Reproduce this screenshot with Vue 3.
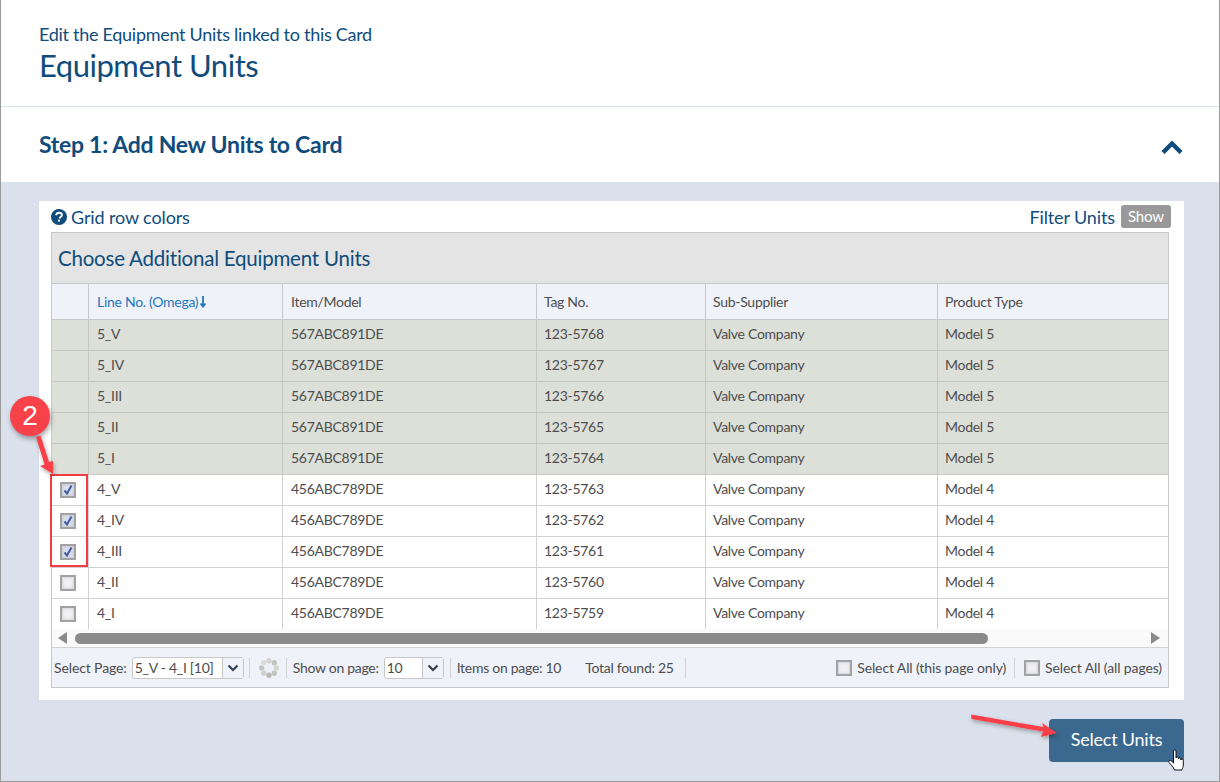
<script setup>
const green = [
  ['5_V', '567ABC891DE', '123-5768', 'Valve Company', 'Model 5'],
  ['5_IV', '567ABC891DE', '123-5767', 'Valve Company', 'Model 5'],
  ['5_III', '567ABC891DE', '123-5766', 'Valve Company', 'Model 5'],
  ['5_II', '567ABC891DE', '123-5765', 'Valve Company', 'Model 5'],
  ['5_I', '567ABC891DE', '123-5764', 'Valve Company', 'Model 5'],
]
const white = [
  ['4_V', '456ABC789DE', '123-5763', 'Valve Company', 'Model 4', true],
  ['4_IV', '456ABC789DE', '123-5762', 'Valve Company', 'Model 4', true],
  ['4_III', '456ABC789DE', '123-5761', 'Valve Company', 'Model 4', true],
  ['4_II', '456ABC789DE', '123-5760', 'Valve Company', 'Model 4', false],
  ['4_I', '456ABC789DE', '123-5759', 'Valve Company', 'Model 4', false],
]
const headers = ['Item/Model', 'Tag No.', 'Sub-Supplier', 'Product Type']
const dots = [
  [10, 2.8, '#d2d2ce'], [15.3, 4.7, '#c4c4c0'], [17.4, 10, '#d6d6d2'], [15.3, 15.3, '#c4c4c0'],
  [10, 17.3, '#b9b9b5'], [4.7, 15.3, '#d2d2ce'], [2.6, 10, '#c4c4c0'], [4.7, 4.7, '#dcdcd8'],
]
</script>

<template>
  <div class="page">
    <header class="top">
      <div class="sub">Edit the Equipment Units linked to this Card</div>
      <h1>Equipment Units</h1>
    </header>
    <div class="step">
      <h2>Step 1: Add New Units to Card</h2>
      <svg width="22" height="14" viewBox="0 0 22 14"><path d="M2 12.500 11 3.500 20 12.500" fill="none" stroke="#0f4c7c" stroke-width="4.400"/></svg>
    </div>
    <main class="body">
      <section class="panel">
        <div class="tools">
          <div class="help">
            <svg width="16" height="16" viewBox="0 0 16 16">
              <circle cx="8" cy="8" r="8" fill="#0f4c7c"/>
              <path d="M5.200 6.200C5.300 4.600 6.500 3.700 8.100 3.700c1.600 0 2.800.9 2.800 2.300 0 1.100-.7 1.600-1.400 2.100-.6.4-.8.7-.8 1.300" fill="none" stroke="#fff" stroke-width="1.900"/>
              <rect x="6.900" y="10.600" width="2" height="2" fill="#fff"/>
            </svg>
            <span>Grid row colors</span>
          </div>
          <div class="filter"><span>Filter Units</span><b>Show</b></div>
        </div>
        <div class="grid">
          <div class="title">Choose Additional Equipment Units</div>
          <div class="row head">
            <div class="cell"></div>
            <div class="cell sort">Line No. (Omega)<svg width="8" height="13" viewBox="0 0 8 13"><path d="M4 1v10M1.500 8.500 4 11.500 6.500 8.500" fill="none" stroke="#1f76c0" stroke-width="1.800"/></svg></div>
            <div v-for="h in headers" :key="h" class="cell">{{ h }}</div>
          </div>
          <div v-for="r in green" :key="r[0]" class="row tinted data">
            <div class="cell"></div>
            <div v-for="c in r" :key="c" class="cell">{{ c }}</div>
          </div>
          <div v-for="r in white" :key="r[0]" class="row data">
            <div class="cell center">
              <span class="cb" :class="{ on: r[5] }">
                <svg v-if="r[5]" width="12" height="12" viewBox="0 0 12 12"><path d="M2.500 6.500 5 9.500 9.500 1.500" fill="none" stroke="#3f5aa6" stroke-width="2"/></svg>
              </span>
            </div>
            <div v-for="c in r.slice(0, 5)" :key="c" class="cell">{{ c }}</div>
          </div>
          <div class="scroll">
            <i class="arrow left"></i>
            <div class="track"><div class="thumb"></div></div>
            <i class="arrow right"></i>
          </div>
          <div class="foot">
            <span class="loose">Select Page:</span>
            <span class="select wide"><em>5_V - 4_I [10]</em><u><svg width="12" height="8" viewBox="0 0 12 8"><path d="M1.500 1.500 6 6 10.500 1.500" fill="none" stroke="#333f4d" stroke-width="2.200"/></svg></u></span>
            <i class="sep first"></i>
            <svg class="spin" width="20" height="20" viewBox="0 0 20 20">
              <circle v-for="d in dots" :key="d[0] + '-' + d[1]" :cx="d[0]" :cy="d[1]" r="2.700" :fill="d[2]"/>
            </svg>
            <i class="sep"></i>
            <span>Show on page:</span>
            <span class="select narrow"><em>10</em><u><svg width="12" height="8" viewBox="0 0 12 8"><path d="M1.500 1.500 6 6 10.500 1.500" fill="none" stroke="#333f4d" stroke-width="2.200"/></svg></u></span>
            <i class="sep"></i>
            <span>Items on page: 10</span>
            <span class="found">Total found: 25</span>
            <i class="sep"></i>
            <span class="spacer"></span>
            <span class="cb"></span>
            <span class="loose">Select All (this page only)</span>
            <i class="sep wider"></i>
            <span class="cb"></span>
            <span class="loose">Select All (all pages)</span>
          </div>
        </div>
      </section>
      <div class="actions"><button type="button">Select Units</button></div>
    </main>

    <div class="badge">2</div>
    <div class="redbox"></div>
    <svg class="overlay" width="1220" height="782" viewBox="0 0 1220 782">
      <defs>
        <filter id="sh" x="-20%" y="-20%" width="140%" height="140%"><feDropShadow dx="1" dy="2" stdDeviation="2" flood-color="#000" flood-opacity=".35"/></filter>
      </defs>
      <g filter="url(#sh)" fill="#f9414a" stroke="none">
        <path d="M36 437 40.500 435.500 49 462 53 461 53 474 40 466 44.500 464.500Z"/>
        <path d="M971 714.500 971.500 719 1043 731.500 1041 737 1057 733 1042 723 1043.500 727Z"/>
      </g>
      <g transform="translate(1168 749)">
        <path d="M5 18 1 13.500c-1-1.500 1-3 2.300-1.600L5.500 14V2c0-1.800 2.500-1.800 2.500 0V9c0-1.400 2.400-1.400 2.400 0v1c0-1.300 2.400-1.300 2.400 0v1c0-1.200 2.500-1.100 2.500.3V16c0 2-.6 3.200-1.300 4.200V21H6.500Z" fill="#fff" stroke="#111" stroke-width="1"/>
      </g>
    </svg>
  </div>
</template>

<style scoped>
.page {
  position: relative;
  width: 1220px;
  height: 782px;
  box-sizing: border-box;
  border: 1px solid #9b9b9b;
  border-top: 0;
  background: #fff;
  display: flex;
  flex-direction: column;
  overflow: hidden;
  font-family: Lato, "Liberation Sans", sans-serif;
  letter-spacing: -0.28px;
  color: #4d4d4d;
}
.top {
  height: 107px;
  box-sizing: border-box;
  padding: 24px 38px 0;
  border-bottom: 1px solid #cfe8ef;
  flex: none;
}
.sub { font-size: 18px; line-height: 21px; color: #0f4c7c; }
h1 { margin: 0; font-size: 31px; line-height: 40px; font-weight: 400; color: #0f4c7c; letter-spacing: -0.47px; }
.step {
  height: 75px;
  flex: none;
  padding: 0 36px 0 38px;
  display: flex;
  align-items: center;
  justify-content: space-between;
}
.step svg { margin-top: 5px; }
h2 { margin: 0 0 2px; font-size: 23px; font-weight: 700; color: #0f4c7c; }
.body { flex: 1; background: #dbe1ec; padding: 19px 35px 0 38px; }
.panel {
  background: #fff;
  height: 499px;
  box-sizing: border-box;
  padding: 0 15px 12px 12px;
  display: flex;
  flex-direction: column;
}
.tools {
  height: 31px;
  flex: none;
  display: flex;
  justify-content: space-between;
  align-items: center;
  font-size: 18px;
  letter-spacing: -0.12px;
  color: #0f4c7c;
}
.help, .filter { display: flex; align-items: center; }
.help { gap: 4px; }
.filter { gap: 6px; margin-right: -2px; }
.filter b {
  width: 50px;
  height: 23px;
  border-radius: 3px;
  background: #999;
  color: #fff;
  font-size: 15px;
  font-weight: 400;
  line-height: 23px;
  text-align: center;
}
.grid {
  flex: 1;
  border: 1px solid #c8c8c8;
  display: flex;
  flex-direction: column;
  background: #fff;
}
.title {
  height: 51px;
  flex: none;
  box-sizing: border-box;
  padding-left: 6px;
  background: #e4e4e4;
  border-bottom: 1px solid #c8c8c8;
  color: #0f4c7c;
  font-size: 20.500px;
  letter-spacing: -0.22px;
  line-height: 51px;
}
.row {
  display: grid;
  grid-template-columns: 37px 194px 254px 169px 232px 1fr;
  height: 31px;
  flex: none;
  box-sizing: border-box;
  border-bottom: 1px solid #d2d2d2;
  font-size: 14px;
  color: #4d4d4d;
}
.row:nth-last-child(3) { border-bottom: 0; height: 30px; }
.head { height: 36px; background: #f0f2f9; border-bottom-color: #c8c8c8; }
.tinted { background: #dce0d9; border-bottom-color: #c4c7c2; }
.cell {
  display: flex;
  align-items: center;
  box-sizing: border-box;
  padding-left: 8px;
  border-right: 1px solid #d2d2d2;
  white-space: nowrap;
}
.data .cell { padding-bottom: 4px; }
.cell:nth-child(n + 4) { padding-left: 7px; }
.cell:last-child { border-right: 0; }
.head .cell { border-right-color: #c8c8c8; }
.tinted .cell { border-right-color: #c4c7c2; }
.data .cell.center { justify-content: center; padding: 0 4px 1px 0; }
.sort { color: #1f76c0; gap: 1px; }
.cb {
  width: 16px;
  height: 16px;
  flex: none;
  box-sizing: border-box;
  border: 2px solid #a2a2a2;
  background: #f1f1f4;
  box-shadow: inset 0 0 3px 1px #d6d6dc;
  display: inline-flex;
  align-items: center;
  justify-content: center;
}
.cb.on { background: #dcdfe9; box-shadow: inset 0 0 3px 1px #c9ccd8; }
.scroll {
  height: 19px;
  flex: none;
  box-sizing: border-box;
  padding: 0 8px 0 6px;
  display: flex;
  align-items: center;
  background: #fafafa;
  border-bottom: 1px solid #d2d2d2;
}
.track { flex: 1; height: 11px; padding: 0 17px 0 8px; }
.thumb { width: 913px; height: 11px; border-radius: 6px; background: #8a8a8a; }
.arrow { width: 0; height: 0; border-top: 6px solid transparent; border-bottom: 6px solid transparent; }
.arrow.left { border-right: 9px solid #8a8a8a; }
.arrow.right { border-left: 9px solid #8a8a8a; }
.foot {
  flex: 1;
  background: #f0f2f9;
  display: flex;
  align-items: center;
  padding: 0 6px 0 2px;
  font-size: 14px;
  color: #4d4d4d;
  white-space: nowrap;
}
.loose { letter-spacing: -0.12px; }
.select {
  display: inline-flex;
  height: 22px;
  margin-left: 5px;
  box-sizing: border-box;
  border: 1px solid #c8c8c8;
  border-radius: 3px;
  background: #fff;
}
.select em { flex: 1; padding-left: 2px; font-style: normal; line-height: 20px; }
.select u {
  width: 20px;
  background: #f0f2f9;
  border-left: 1px solid #c8c8c8;
  display: flex;
  align-items: center;
  justify-content: center;
}
.select.wide { width: 112px; }
.select.narrow { width: 60px; }
.sep { width: 1px; height: 20px; background: #d2d2d2; margin: 0 6px; flex: none; }
.sep.first { margin-left: 5px; }
.sep.wider { margin: 0 9px 0 8px; }
.spin { margin: 0 1px 0 3px; }
.found { margin: 0 5px 0 24px; }
.spacer { flex: 1; }
.foot .cb { margin-right: 5px; }
.actions { display: flex; justify-content: flex-end; padding-top: 19px; }
button {
  width: 135px;
  height: 43px;
  border: 0;
  border-radius: 4px;
  padding: 0 0 3px;
  background: #3b688f;
  color: #fff;
  font: 18px Lato, "Liberation Sans", sans-serif;
  letter-spacing: -0.22px;
}
.badge {
  position: absolute;
  left: 9px;
  top: 396px;
  width: 40px;
  height: 40px;
  border-radius: 50%;
  background: #f9414a;
  color: #fff;
  font-family: "Liberation Sans", sans-serif;
  font-size: 28px;
  line-height: 40px;
  text-align: center;
  box-shadow: 1px 3px 5px rgba(0, 0, 0, .35);
}
.redbox {
  position: absolute;
  left: 49px;
  top: 474px;
  width: 38px;
  height: 93px;
  box-sizing: border-box;
  border: 2px solid #f23c44;
}
.overlay { position: absolute; left: -1px; top: 0; pointer-events: none; }
</style>
